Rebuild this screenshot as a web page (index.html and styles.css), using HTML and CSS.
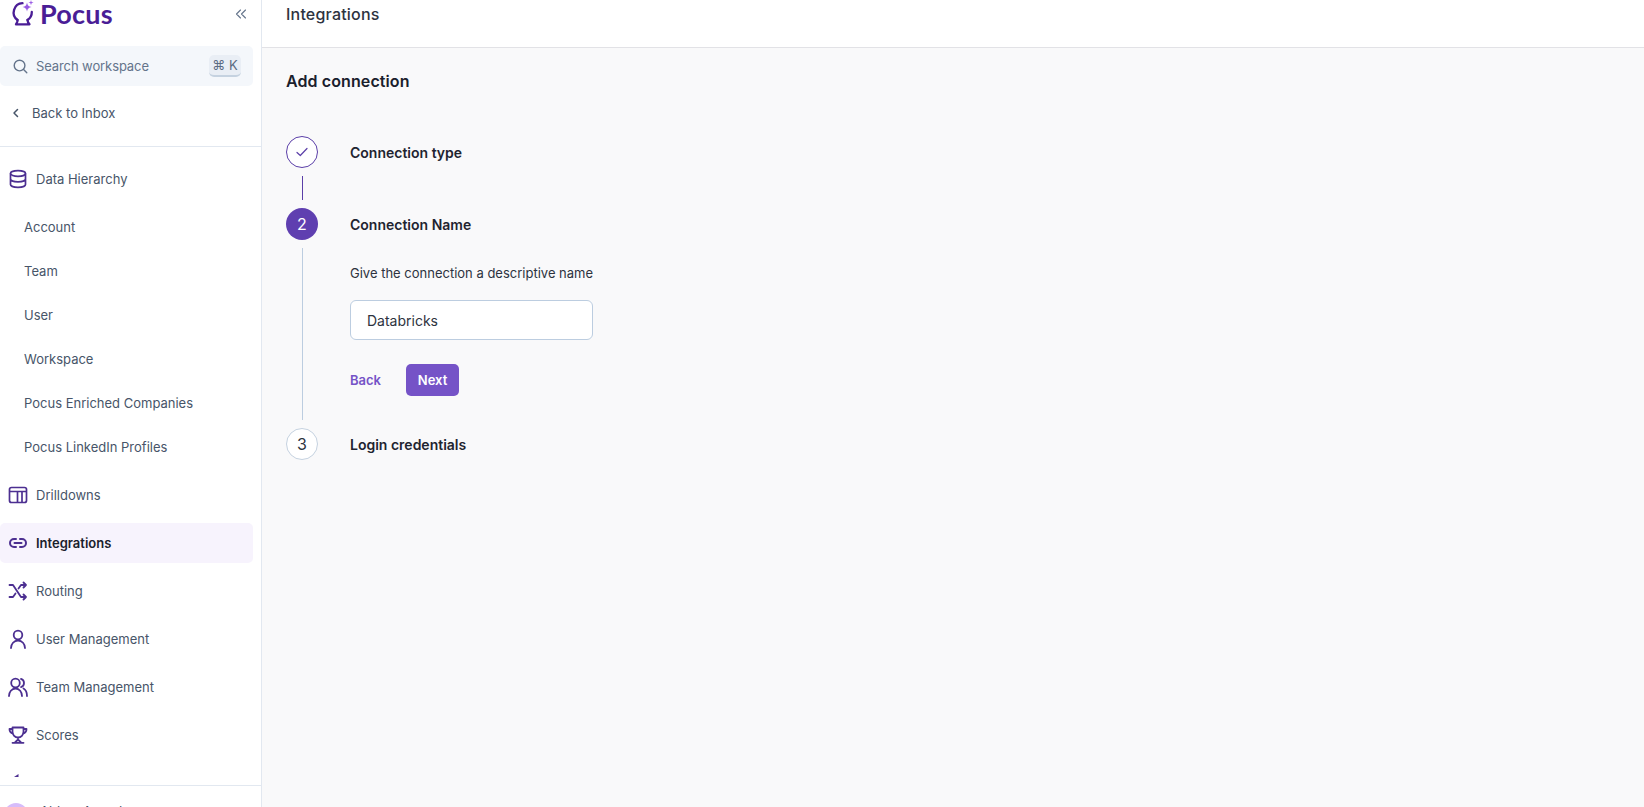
FILE: index.html
```html
<!DOCTYPE html>
<html lang="en">
<head>
<meta charset="utf-8">
<title>Integrations</title>
<link rel="stylesheet" href="styles.css">
</head>
<body>
<div class="app">
  <aside class="sidebar">
    <div class="brand">
      <svg class="logo" width="26" height="26" viewBox="0 0 26 26" fill="none" stroke="#4a1d96" stroke-width="2.300" stroke-linecap="round" stroke-linejoin="round"><path d="M12.500 3.200A9.300 9.300 0 0 0 7.500 20M17.500 20A9.300 9.300 0 0 0 21.800 12"/><path d="M7.500 20c.3 1.800-.6 3.200-1.500 4.300h13.500c-1-1.100-2-2.500-2-4.300"/><path fill="#9b5de5" stroke="none" d="M17 2.500q.5 4 4.500 4.500-4 .5-4.500 4.500-.5-4-4.500-4.500 4-.5 4.500-4.500z"/><path fill="#9b5de5" stroke="none" d="M21 0l.6 2 2 .6-2 .6-.6 2-.6-2-2-.6 2-.6z"/></svg>
      <span class="brand-name">Pocus</span>
      <svg class="collapse" width="12" height="12" viewBox="0 0 12 12" fill="none" stroke="#64748b" stroke-width="1.100" stroke-linecap="round" stroke-linejoin="round"><path d="M5.500 2 1.500 6l4 4M10.500 2l-4 4 4 4"/></svg>
    </div>
    <div class="search">
      <svg width="15" height="15" viewBox="0 0 16 16" fill="none" stroke="#64748b" stroke-width="1.500" stroke-linecap="round"><circle cx="7" cy="7" r="5.700"/><path d="m11.300 11.300 3.400 3.400"/></svg>
      <span class="search-text">Search workspace</span>
      <span class="kbd">⌘ K</span>
    </div>
    <div class="back-row">
      <svg width="10" height="10" viewBox="0 0 10 10" fill="none" stroke="#475569" stroke-width="1.500" stroke-linecap="round" stroke-linejoin="round"><path d="M6.500 1.500 3 5l3.500 3.500"/></svg>
      <span>Back to Inbox</span>
    </div>
    <nav class="nav">
      <div class="nav-item">
        <svg width="20" height="20" viewBox="0 0 20 20" fill="none" stroke="#4c2f91" stroke-width="1.700"><ellipse cx="10" cy="4.500" rx="7.500" ry="2.800"/><path d="M2.500 4.500v11c0 1.600 3.400 2.800 7.500 2.800s7.500-1.200 7.500-2.800v-11M2.500 10c0 1.600 3.400 2.800 7.500 2.800s7.500-1.200 7.500-2.800"/></svg>
        <span>Data Hierarchy</span>
      </div>
      <div class="sub-item">Account</div>
      <div class="sub-item">Team</div>
      <div class="sub-item">User</div>
      <div class="sub-item">Workspace</div>
      <div class="sub-item">Pocus Enriched Companies</div>
      <div class="sub-item">Pocus LinkedIn Profiles</div>
      <div class="nav-item">
        <svg width="20" height="20" viewBox="0 0 20 20" fill="none" stroke="#4c2f91" stroke-width="1.700" stroke-linejoin="round"><rect x="1.500" y="2.500" width="17" height="15" rx="2"/><path d="M1.500 6.500h17M9.500 6.500V17.500M14 6.500V17.500"/></svg>
        <span>Drilldowns</span>
      </div>
      <div class="nav-item active">
        <svg width="20" height="20" viewBox="0 0 20 20" fill="none" stroke="#4c2f91" stroke-width="2" stroke-linecap="round"><path d="M8 6H6a4 4 0 0 0 0 8h2M12 6h2a4 4 0 0 1 0 8h-2M6.500 10h7"/></svg>
        <span>Integrations</span>
      </div>
      <div class="nav-item">
        <svg width="20" height="20" viewBox="0 0 20 20" fill="none" stroke="#4c2f91" stroke-width="1.800" stroke-linecap="round" stroke-linejoin="round"><path d="M1.500 4h3.500L13 16h5M1.500 16h3.500l2.500-3.500M10.500 7.500 13 4h5M15.500 1.500 18 4l-2.500 2.500M15.500 13.500 18 16l-2.500 2.500"/></svg>
        <span>Routing</span>
      </div>
      <div class="nav-item">
        <svg width="20" height="20" viewBox="0 0 20 20" fill="none" stroke="#4c2f91" stroke-width="1.800" stroke-linecap="round"><circle cx="10" cy="6" r="4.300"/><path d="M3 19c0-4 3-7.500 7-7.500s7 3.500 7 7.500"/></svg>
        <span>User Management</span>
      </div>
      <div class="nav-item">
        <svg width="20" height="20" viewBox="0 0 20 20" fill="none" stroke="#4c2f91" stroke-width="1.800" stroke-linecap="round"><circle cx="7.500" cy="6" r="4.300"/><path d="M1 19c0-4 2.700-7.500 6.500-7.500S14 15 14 19M13 1.900a4.300 4.300 0 0 1 0 8.200M15.500 11.500c2 1.200 3.500 3.800 3.500 7.500"/></svg>
        <span>Team Management</span>
      </div>
      <div class="nav-item">
        <svg width="20" height="20" viewBox="0 0 20 20" fill="none" stroke="#4c2f91" stroke-width="1.800" stroke-linecap="round" stroke-linejoin="round"><path d="M4.500 2.500h11v4.500a5.500 5.500 0 0 1-11 0zM4.500 4H1.500c0 2.500 1.300 4 3.500 4.500M15.500 4h3c0 2.500-1.300 4-3.500 4.500M10 12.500v2l-3 3M10 14.500l3 3M4.500 17.800h11"/></svg>
        <span>Scores</span>
      </div>
      <div class="nav-item">
        <svg width="20" height="20" viewBox="0 0 20 20"><path fill="#4c2f91" d="M10.500 1 6 4h4.500z"/></svg>
      </div>
    </nav>
    <div class="account">
      <span class="avatar"></span>
      <span class="account-name">Abhay Anand</span>
    </div>
  </aside>
  <main class="main">
    <header class="topbar">Integrations</header>
    <section class="content">
      <h1 class="page-title">Add connection</h1>
      <div class="steps">
        <div class="step">
          <div class="marker">
            <span class="circle done">
              <svg width="14" height="14" viewBox="0 0 14 14" fill="none" stroke="#5b3fa8" stroke-width="1.200" stroke-linecap="round" stroke-linejoin="round"><path d="m2 7.500 3.300 3L12 3.500"/></svg>
            </span>
            <span class="line line-done"></span>
          </div>
          <div class="step-body"><div class="step-title">Connection type</div></div>
        </div>
        <div class="step">
          <div class="marker">
            <span class="circle current">2</span>
            <span class="line line-todo"></span>
          </div>
          <div class="step-body">
            <div class="step-title">Connection Name</div>
            <label class="field-label" for="conn">Give the connection a descriptive name</label>
            <input class="field" id="conn" type="text" value="Databricks">
            <div class="actions">
              <button class="btn-back" type="button">Back</button>
              <button class="btn-next" type="button">Next</button>
            </div>
          </div>
        </div>
        <div class="step">
          <div class="marker"><span class="circle todo">3</span></div>
          <div class="step-body"><div class="step-title">Login credentials</div></div>
        </div>
      </div>
    </section>
  </main>
</div>
</body>
</html>
```
FILE: styles.css
```css
* { box-sizing: border-box; }
html, body { margin: 0; height: 100%; overflow: hidden; }
body { font-family: Inter, "Liberation Sans", sans-serif; color: #1a202c; background: #fff; }
.app { display: flex; height: 807px; }

.sidebar { width: 262px; flex: none; display: flex; flex-direction: column; background: #fff; border-right: 1px solid #e2e8f0; overflow: hidden; }
.brand { height: 46px; flex: none; display: flex; align-items: flex-start; padding: 0 14px 0 10px; }
.brand-name { font-family: Lato, Inter, sans-serif; font-size: 27px; line-height: 27px; font-weight: 700; letter-spacing: .2px; color: #4a1d96; margin-left: 4px; }
.collapse { margin-left: auto; margin-top: 8px; }

.search { width: 253px; height: 40px; flex: none; display: flex; align-items: center; background: #f4f7fb; border-radius: 5px; padding: 0 12px 0 13px; font-size: 13px; color: #64748b; }
.search-text { margin-left: 8px; letter-spacing: -.1px; }
.kbd { margin-left: auto; width: 32px; height: 22px; display: flex; align-items: center; justify-content: center; background: #e9eef5; border-bottom: 2px solid #c5d2e0; border-radius: 5px; font-size: 13px; color: #5b6b82; }

.back-row { height: 61px; flex: none; display: flex; align-items: center; gap: 11px; padding: 0 0 6px 11px; font-size: 13px; color: #475569; border-bottom: 1px solid #e2e8f0; }

.nav { flex: 1; min-height: 0; overflow: hidden; margin-bottom: 8px; padding-top: 12px; }
.nav-item { width: 253px; height: 40px; margin-bottom: 8px; display: flex; align-items: center; gap: 8px; padding-left: 8px; border-radius: 5px; font-size: 13px; color: #475569; }
.nav-item svg { flex: none; }
.nav-item.active { background: #f7f3fd; color: #1a202c; font-weight: 600; }
.sub-item { height: 44px; display: flex; align-items: center; padding-left: 24px; font-size: 13px; color: #475569; }
.sub-item + .nav-item { margin-top: 6px; }
.nav-item + .sub-item { margin-top: -2px; }

.account { height: 22px; flex: none; border-top: 1px solid #e2e8f0; display: flex; gap: 12px; padding: 17px 0 0 4px; font-size: 13px; color: #475569; }
.avatar { width: 24px; height: 24px; flex: none; border-radius: 50%; background: #d6bcfa; }
.account-name { line-height: 14px; margin-top: 1px; }

.main { flex: 1; min-width: 0; display: flex; flex-direction: column; background: #f9f9fa; }
.topbar { height: 48px; flex: none; background: #fff; border-bottom: 1px solid #e2e2e6; padding: 3px 0 0 24px; font-size: 16px; line-height: 22px; font-weight: 500; letter-spacing: .2px; color: #2d3340; }
.content { flex: 1; padding: 0 0 0 24px; }
.page-title { margin: 22px 0 0; font-size: 16px; line-height: 22px; font-weight: 600; letter-spacing: .1px; color: #1a202c; }

.steps { margin-top: 44px; display: flex; flex-direction: column; gap: 8px; }
.step { display: flex; }
.marker { width: 32px; flex: none; display: flex; flex-direction: column; align-items: center; gap: 8px; }
.circle { width: 32px; height: 32px; flex: none; display: flex; align-items: center; justify-content: center; border-radius: 50%; font-size: 16px; }
.circle.done { border: 1px solid #5b3fa8; background: #fff; }
.circle.current { background: #5f3fb0; color: #fff; }
.circle.todo { border: 1px solid #c5d2e0; background: #fff; color: #2d3340; }
.line { width: 1px; }
.line-done { flex: none; height: 24px; background: #5b3fa8; }
.line-todo { flex: 1; background: #bccde0; }

.step-body { margin-left: 32px; }
.step-title { height: 32px; display: flex; align-items: center; font-size: 14px; font-weight: 600; color: #1f2430; }
.field-label { display: block; margin-top: 24px; font-size: 13px; line-height: 18px; color: #2d3340; }
.field { display: block; width: 243px; height: 40px; margin-top: 18px; padding: 0 16px; background: #fff; border: 1px solid #bccde0; border-radius: 6px; font: 400 14px Inter, "Liberation Sans", sans-serif; color: #2d3340; }
.actions { margin-top: 24px; display: flex; align-items: center; gap: 25px; }
.btn-back { padding: 0; border: 0; background: none; font: 600 13px Inter, "Liberation Sans", sans-serif; color: #7553c7; }
.btn-next { width: 53px; height: 32px; padding: 0; border: 0; border-radius: 5px; background: #7553c7; color: #fff; font: 600 13px Inter, "Liberation Sans", sans-serif; }
.step:nth-child(2) .step-body { padding-bottom: 24px; }
```
